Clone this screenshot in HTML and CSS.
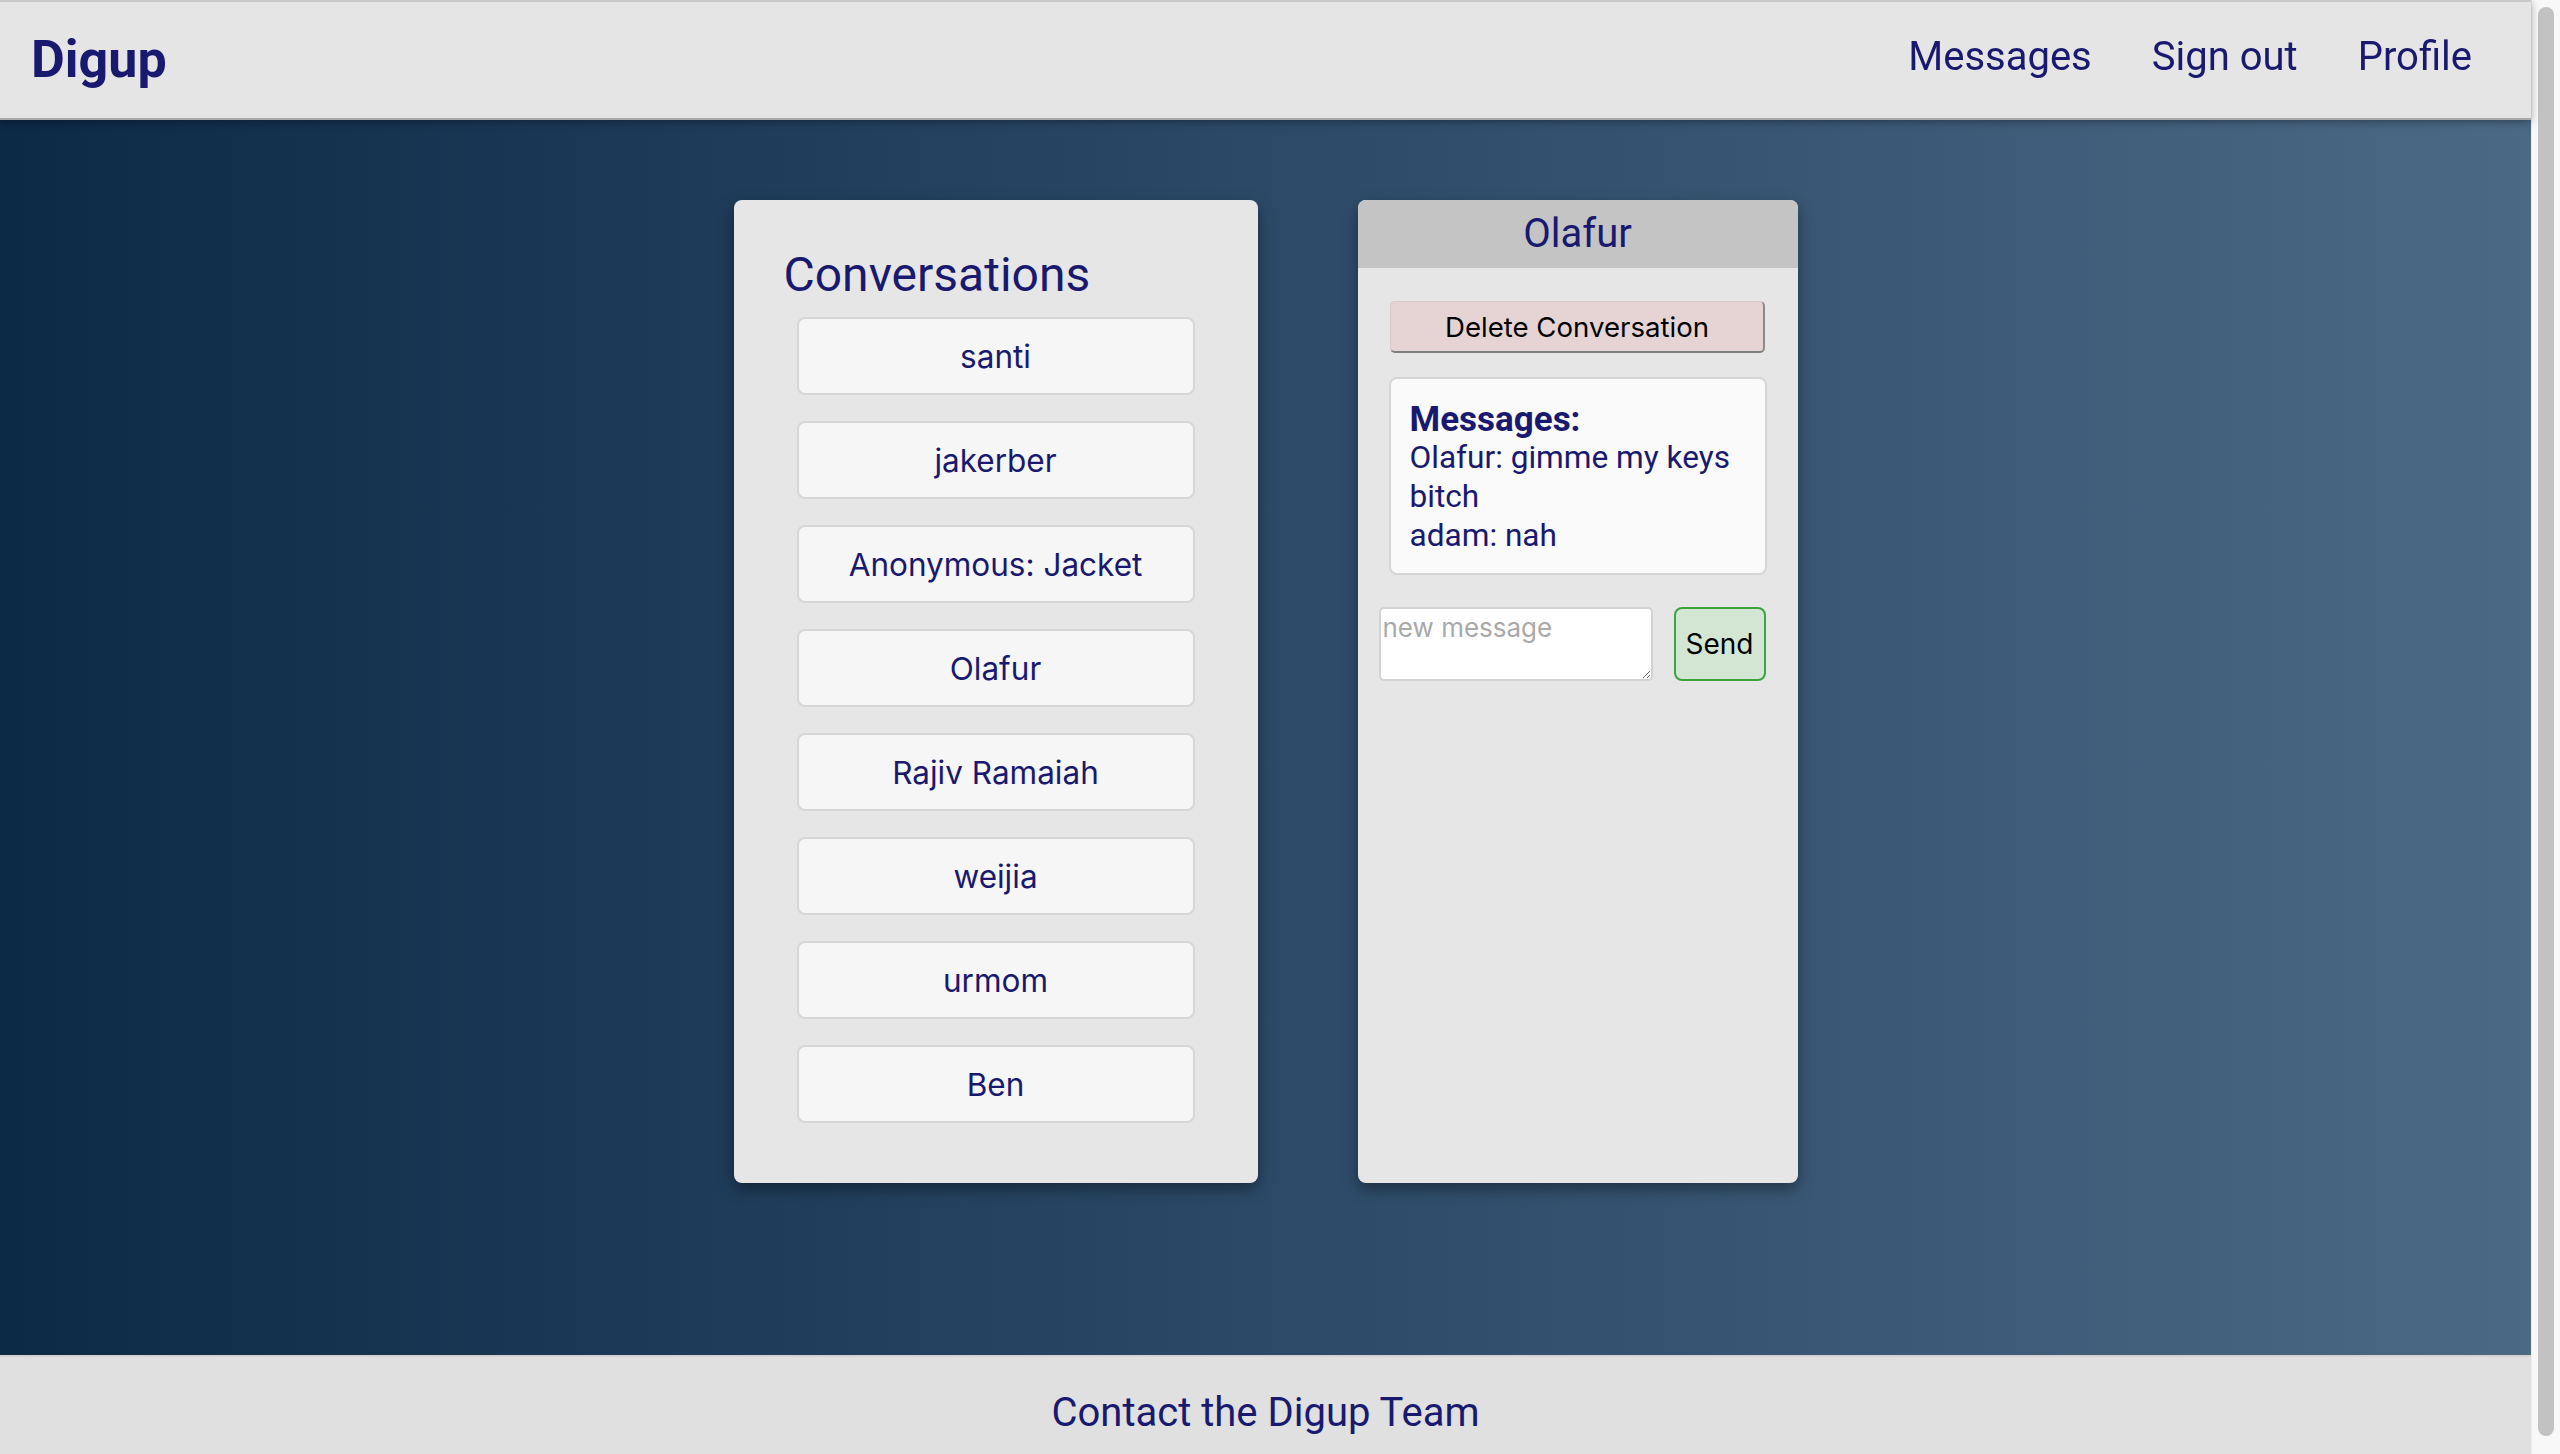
FILE: index.html
```html
<!DOCTYPE html>
<html lang="en">
<head>
<meta charset="utf-8">
<title>Digup - Messages</title>
<link rel="stylesheet" href="styles.css">
</head>
<body>
<div class="page">
  <header class="topbar">
    <div class="logo">Digup</div>
    <nav class="nav">
      <a class="nav-link" href="#">Messages</a>
      <a class="nav-link" href="#">Sign out</a>
      <a class="nav-link" href="#">Profile</a>
    </nav>
  </header>
  <main class="main">
    <section class="panel conv-panel">
      <h2 class="conv-title">Conversations</h2>
      <div class="conv-list">
        <button class="conv-item">santi</button>
        <button class="conv-item">jakerber</button>
        <button class="conv-item">Anonymous: Jacket</button>
        <button class="conv-item">Olafur</button>
        <button class="conv-item">Rajiv Ramaiah</button>
        <button class="conv-item">weijia</button>
        <button class="conv-item">urmom</button>
        <button class="conv-item">Ben</button>
      </div>
    </section>
    <section class="panel chat-panel">
      <div class="chat-head">Olafur</div>
      <div class="chat-body">
        <button class="delete-btn">Delete Conversation</button>
        <div class="msg-box">
          <div class="msg-title">Messages:</div>
          <div class="msg-line">Olafur: gimme my keys bitch</div>
          <div class="msg-line">adam: nah</div>
        </div>
        <div class="compose">
          <textarea class="compose-input" placeholder="new message"></textarea>
          <button class="send-btn">Send</button>
        </div>
      </div>
    </section>
  </main>
  <footer class="footer">Contact the Digup Team</footer>
</div>
<div class="scrollbar"><div class="scroll-thumb"></div></div>
</body>
</html>
```
FILE: styles.css
```css
html, body {
  margin: 0;
  padding: 0;
  height: 100%;
  overflow: hidden;
}
body {
  font-family: Roboto, "Liberation Sans", sans-serif;
  color: #191970;
  background: #e0e0e0;
}
.page {
  margin-right: 29px;
  height: 1454px;
  display: flex;
  flex-direction: column;
}
.topbar {
  position: relative;
  z-index: 2;
  box-sizing: border-box;
  height: 120px;
  background: #e5e5e5;
  border-top: 2px solid #c9c9c9;
  border-bottom: 2px solid #a9a9a9;
  box-shadow: 0 2px 8px rgba(0, 0, 0, 0.35);
  display: flex;
  align-items: center;
  justify-content: space-between;
  padding: 0 59px 0 31px;
}
.logo {
  font-size: 52px;
  font-weight: 700;
  line-height: 61px;
  padding-bottom: 2px;
}
.nav {
  display: flex;
  gap: 60px;
  padding-bottom: 7px;
}
.nav-link {
  font-size: 40px;
  line-height: 47px;
  color: #191970;
  text-decoration: none;
}
.main {
  flex: 1;
  background: linear-gradient(to right, #0c2946 0%, #2c4a68 50%, #4b6985 100%);
  display: flex;
  justify-content: center;
  align-items: stretch;
  gap: 100px;
  padding: 80px 0 172px;
}
.panel {
  background: #e6e6e6;
  border-radius: 8px;
  box-shadow: 0 6px 16px rgba(0, 0, 0, 0.4);
}
.conv-panel {
  box-sizing: border-box;
  width: 524px;
  padding: 47px 0 60px;
}
.conv-title {
  margin: 0 0 14px 50px;
  font-size: 48px;
  font-weight: 400;
  line-height: 56px;
}
.conv-list {
  display: flex;
  flex-direction: column;
  align-items: center;
  gap: 26px;
}
.conv-item {
  box-sizing: border-box;
  width: 398px;
  height: 78px;
  background: #f6f6f6;
  border: 2px solid #d6d6d6;
  border-radius: 8px;
  font-family: Inter, Roboto, sans-serif;
  font-size: 31.5px;
  color: #191970;
  padding: 0;
}
.chat-panel {
  width: 440px;
  overflow: hidden;
  display: flex;
  flex-direction: column;
}
.chat-head {
  height: 68px;
  background: #c4c4c4;
  text-align: center;
  font-size: 40px;
  line-height: 68px;
}
.chat-body {
  display: flex;
  flex-direction: column;
  align-items: center;
  padding-top: 33px;
}
.delete-btn {
  box-sizing: border-box;
  width: 375px;
  height: 52px;
  background: #e6d3d3;
  border-style: solid;
  border-width: 1px 2px 2px 1px;
  border-color: #d8c8c8 #8a8a8a #7e7e7e #d8c8c8;
  border-radius: 5px;
  font-family: Inter, "Liberation Sans", sans-serif;
  font-size: 27.6px;
  color: #000;
  padding: 0;
}
.msg-box {
  box-sizing: border-box;
  width: 378px;
  margin-top: 24px;
  padding: 22px 19px 18px;
  background: #fafafa;
  border: 2px solid #d6d6d6;
  border-radius: 8px;
  font-size: 31.6px;
  line-height: 39px;
}
.msg-title {
  font-size: 35px;
  font-weight: 700;
  line-height: 37px;
}
.compose {
  align-self: stretch;
  display: flex;
  gap: 21px;
  margin-top: 32px;
  padding-left: 21px;
}
.compose-input {
  box-sizing: border-box;
  width: 274px;
  height: 74px;
  margin: 0;
  padding: 3px 2px;
  background: #fff;
  border: 2px solid #d2d2d2;
  border-radius: 5px;
  font-family: Inter, "Liberation Sans", sans-serif;
  font-size: 26px;
  color: #000;
}
.compose-input::placeholder {
  color: #a9a9a9;
}
.send-btn {
  box-sizing: border-box;
  width: 92px;
  height: 74px;
  background: #d3e6d3;
  border: 2px solid #3ca43c;
  border-radius: 8px;
  font-family: Inter, "Liberation Sans", sans-serif;
  font-size: 28px;
  color: #000;
  padding: 0;
}
.footer {
  box-sizing: border-box;
  height: 99px;
  background: #e0e0e0;
  border-top: 2px solid #d2d2d2;
  text-align: center;
  font-size: 40px;
  line-height: 47px;
  padding-top: 32px;
}
.scrollbar {
  position: fixed;
  top: 0;
  right: 0;
  width: 29px;
  height: 100%;
  background: #f8f8f8;
  border-left: 1px solid #ececec;
  box-sizing: border-box;
}
.scroll-thumb {
  position: absolute;
  left: 6px;
  top: 7px;
  bottom: 18px;
  width: 16px;
  border-radius: 8px;
  background: #c2c2c2;
}
```
